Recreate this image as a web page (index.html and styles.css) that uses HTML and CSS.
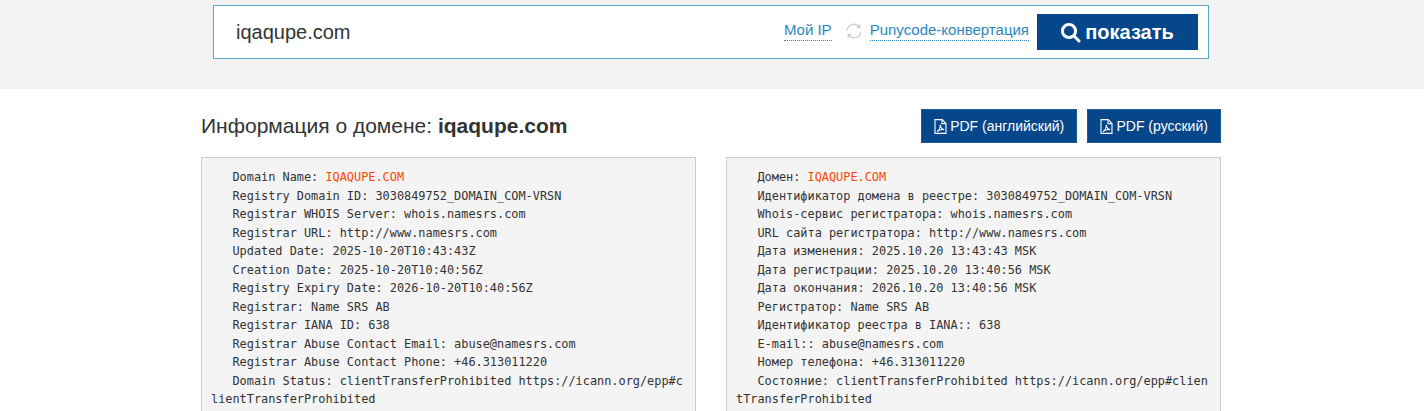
FILE: index.html
```html
<!DOCTYPE html>
<html lang="ru">
<head>
<meta charset="utf-8">
<title>iqaqupe.com</title>
<link rel="stylesheet" href="styles.css">
</head>
<body>
<header class="top">
  <form class="search">
    <span class="query">iqaqupe.com</span>
    <div class="tools">
      <a class="dotted" href="#">Мой IP</a>
      <svg class="sync" width="16" height="16" viewBox="0 0 16 16" fill="none" stroke="#cfcfcf" stroke-width="1.4"><path d="M1.2 7.2A6.9 6.9 0 0 1 13 3.4"/><path d="M14.4 .6V5.2H9.8" fill="#cfcfcf" stroke="none"/><path d="M14.8 8.8A6.9 6.9 0 0 1 3 12.6"/><path d="M1.6 15.4V10.8H6.2" fill="#cfcfcf" stroke="none"/></svg>
      <a class="dotted puny" href="#">Punycode-конвертация</a>
      <button class="show" type="button">
        <svg width="21" height="21" viewBox="0 0 21 21" fill="none" stroke="#fff" stroke-width="3"><circle cx="9" cy="9" r="6.6"/><path d="M13.8 13.8L19 19" stroke-linecap="round"/></svg>
        показать
      </button>
    </div>
  </form>
</header>
<main class="content">
  <div class="head">
    <h1>Информация о домене: <b>iqaqupe.com</b></h1>
    <div class="pdfs">
      <a class="pdf" href="#"><svg width="13" height="15" viewBox="0 0 13 15" fill="none" stroke="#fff" stroke-width="1.1"><path d="M1 .6H8.2L12 4.4V14.4H1Z"/><path d="M8 .8V4.6H11.8"/><path d="M3 12.6C5 11.6 6.4 8.4 6.2 5.8 6.6 8.4 8 10.4 10.2 10.6 7.8 10.4 4.8 11 3 12.6Z"/></svg>PDF (английский)</a>
      <a class="pdf" href="#"><svg width="13" height="15" viewBox="0 0 13 15" fill="none" stroke="#fff" stroke-width="1.1"><path d="M1 .6H8.2L12 4.4V14.4H1Z"/><path d="M8 .8V4.6H11.8"/><path d="M3 12.6C5 11.6 6.4 8.4 6.2 5.8 6.6 8.4 8 10.4 10.2 10.6 7.8 10.4 4.8 11 3 12.6Z"/></svg>PDF (русский)</a>
    </div>
  </div>
  <div class="cols">
<pre class="whois">   Domain Name: <span class="hl">IQAQUPE.COM</span>
   Registry Domain ID: 3030849752_DOMAIN_COM-VRSN
   Registrar WHOIS Server: whois.namesrs.com
   Registrar URL: http://www.namesrs.com
   Updated Date: 2025-10-20T10:43:43Z
   Creation Date: 2025-10-20T10:40:56Z
   Registry Expiry Date: 2026-10-20T10:40:56Z
   Registrar: Name SRS AB
   Registrar IANA ID: 638
   Registrar Abuse Contact Email: abuse@namesrs.com
   Registrar Abuse Contact Phone: +46.313011220
   Domain Status: clientTransferProhibited https://icann.org/epp#clientTransferProhibited
</pre>
<pre class="whois">   Домен: <span class="hl">IQAQUPE.COM</span>
   Идентификатор домена в реестре: 3030849752_DOMAIN_COM-VRSN
   Whois-сервис регистратора: whois.namesrs.com
   URL сайта регистратора: http://www.namesrs.com
   Дата изменения: 2025.10.20 13:43:43 MSK
   Дата регистрации: 2025.10.20 13:40:56 MSK
   Дата окончания: 2026.10.20 13:40:56 MSK
   Регистратор: Name SRS AB
   Идентификатор реестра в IANA:: 638
   E-mail:: abuse@namesrs.com
   Номер телефона: +46.313011220
   Состояние: clientTransferProhibited https://icann.org/epp#clientTransferProhibited
</pre>
  </div>
</main>
</body>
</html>
```
FILE: styles.css
```css
* { box-sizing: border-box; }
html, body { margin: 0; height: 411px; overflow: hidden; background: #fff; }
body { font-family: "Liberation Sans", Arial, sans-serif; color: #333; }
.top { height: 89px; background: #f2f2f2; padding-top: 5px; }
.search {
  width: 996px; height: 54px; margin-left: 213px;
  background: #fff; border: 1px solid #5fa5cb;
  display: flex; align-items: center; justify-content: space-between;
  padding: 0 10px 0 22px;
}
.query { font-size: 20px; color: #333; }
.tools { display: flex; align-items: center; }
.dotted {
  font-size: 15px; line-height: 17px; color: #2a87bd; text-decoration: none;
  border-bottom: 1px dotted #2a87bd; margin-top: -2px; padding-bottom: 2px;
}
.sync { margin: -3px 8px 0 14px; }
.puny { margin-right: 8px; }
.show {
  width: 161px; height: 36px; border: 0; background: #05478a; color: #fff;
  font: bold 20px "Liberation Sans", Arial, sans-serif;
  display: flex; align-items: center; justify-content: center; gap: 4px; padding: 0 1px 0 0;
}
.content { width: 1020px; margin-left: 201px; }
.head { display: flex; justify-content: space-between; align-items: center; height: 34px; margin-top: 20px; }
h1 { margin: 0; font-size: 21px; font-weight: normal; color: #333; }
.pdfs { display: flex; gap: 10px; }
.pdf {
  height: 34px; padding: 0 12.1px; background: #05478a; border: 1px solid #1d5a96; color: #fff;
  font-size: 14px; text-decoration: none;
  display: flex; align-items: center; gap: 3px;
}
.cols { display: flex; gap: 30px; margin-top: 14px; }
.whois {
  flex: 1 1 0; min-width: 0; margin: 0; padding: 10px 10px 10px 9px; height: 400px;
  background: #f4f4f4; border: 1px solid #ccc;
  font-family: "DejaVu Sans Mono", monospace; font-size: 11.88px; line-height: 18.5px;
  color: #333; white-space: pre-wrap; word-break: break-all;
}
.hl { color: #ff4500; }
```
